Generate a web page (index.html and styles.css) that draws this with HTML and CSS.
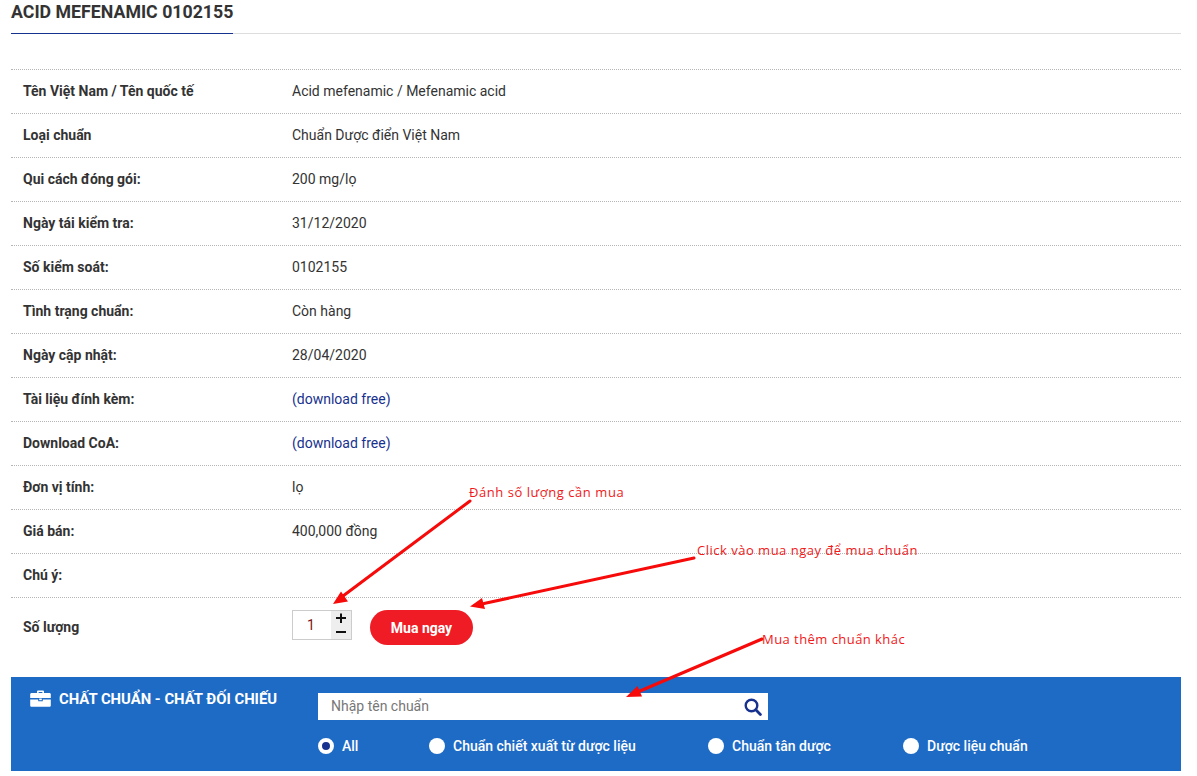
FILE: index.html
```html
<!DOCTYPE html>
<html lang="vi">
<head>
<meta charset="utf-8">
<title>ACID MEFENAMIC 0102155</title>
<link rel="stylesheet" href="styles.css">
</head>
<body>
<main class="page">
  <header class="head"><h1 class="title">ACID MEFENAMIC 0102155</h1></header>
  <section class="info">
    <div class="row"><div class="label">Tên Việt Nam / Tên quốc tế</div><div class="value">Acid mefenamic / Mefenamic acid</div></div>
    <div class="row"><div class="label">Loại chuẩn</div><div class="value">Chuẩn Dược điển Việt Nam</div></div>
    <div class="row"><div class="label">Qui cách đóng gói:</div><div class="value">200 mg/lọ</div></div>
    <div class="row"><div class="label">Ngày tái kiểm tra:</div><div class="value">31/12/2020</div></div>
    <div class="row"><div class="label">Số kiểm soát:</div><div class="value">0102155</div></div>
    <div class="row"><div class="label">Tình trạng chuẩn:</div><div class="value">Còn hàng</div></div>
    <div class="row"><div class="label">Ngày cập nhật:</div><div class="value">28/04/2020</div></div>
    <div class="row"><div class="label">Tài liệu đính kèm:</div><div class="value"><a class="link" href="#">(download free)</a></div></div>
    <div class="row"><div class="label">Download CoA:</div><div class="value"><a class="link" href="#">(download free)</a></div></div>
    <div class="row"><div class="label">Đơn vị tính:</div><div class="value">lọ</div></div>
    <div class="row"><div class="label">Giá bán:</div><div class="value">400,000 đồng</div></div>
    <div class="row"><div class="label">Chú ý:</div><div class="value"></div></div>
    <div class="row row-buy">
      <div class="label">Số lượng</div>
      <div class="value buy">
        <div class="qty">
          <span class="qty-num">1</span>
          <span class="qty-btns">
            <svg class="qty-icon" viewBox="0 0 20 14" width="20" height="14" aria-hidden="true"><path d="M5 7h10M10 2.500v9.500" stroke="#111" stroke-width="2"/></svg>
            <svg class="qty-icon" viewBox="0 0 20 14" width="20" height="14" aria-hidden="true"><path d="M5 7h10" stroke="#111" stroke-width="2"/></svg>
          </span>
        </div>
        <button class="buy-btn" type="button">Mua ngay</button>
      </div>
    </div>
  </section>
  <section class="panel">
    <div class="panel-title">
      <svg class="case" viewBox="0 0 21 17" width="21" height="17" aria-hidden="true">
        <path d="M7 3V1.600C7 .9 7.600.4 8.200.4h4.600c.7 0 1.200.5 1.200 1.200V3h-1.600V2H8.600v1z" fill="#fff"/>
        <path d="M1.600 3h17.800c.8 0 1.400.6 1.400 1.400V8H.2V4.400C.2 3.600.8 3 1.600 3z" fill="#fff"/>
        <path d="M.2 9.400h8v1.800h4.600V9.400h8v6c0 .8-.6 1.400-1.400 1.400H1.600c-.8 0-1.400-.6-1.400-1.400z" fill="#fff"/>
        <rect x="9.200" y="8.600" width="2.600" height="1.600" fill="#fff"/>
      </svg>
      <span class="panel-name">CHẤT CHUẨN - CHẤT ĐỐI CHIẾU</span>
    </div>
    <div class="panel-main">
      <div class="search">
        <span class="placeholder">Nhập tên chuẩn</span>
        <svg class="search-icon" viewBox="0 0 18 18" width="18" height="18" aria-hidden="true">
          <circle cx="7.500" cy="7.500" r="5.800" fill="none" stroke="#17318f" stroke-width="2.400"/>
          <path d="M11.800 11.800L16.400 16.400" stroke="#17318f" stroke-width="2.800" stroke-linecap="round"/>
        </svg>
      </div>
      <div class="radios">
        <label class="radio radio-all"><span class="dot dot-on"></span>All</label>
        <label class="radio radio-extract"><span class="dot"></span>Chuẩn chiết xuất từ dược liệu</label>
        <label class="radio radio-new"><span class="dot"></span>Chuẩn tân dược</label>
        <label class="radio"><span class="dot"></span>Dược liệu chuẩn</label>
      </div>
    </div>
  </section>
</main>
<svg class="arrows" viewBox="0 0 1197 776" width="1197" height="776" aria-hidden="true">
  <path d="M470 501L343 596" class="arrow"/>
  <path d="M333 604L348 601.500L341 591.500z" class="head-fill"/>
  <path d="M694 558L484 603.500" class="arrow"/>
  <path d="M470 606.500L485 609L482 598z" class="head-fill"/>
  <path d="M762 639L640 691" class="arrow"/>
  <path d="M626 697L642 696.500L637.500 686z" class="head-fill"/>
</svg>
<span class="note note-qty">Đánh số lượng cần mua</span>
<span class="note note-buy">Click vào mua ngay để mua chuẩn</span>
<span class="note note-more">Mua thêm chuẩn khác</span>
</body>
</html>
```
FILE: styles.css
```css
* { box-sizing: border-box; }
html, body { margin: 0; padding: 0; background: #fff; }
body {
  position: relative;
  height: 776px;
  overflow: hidden;
  font-family: Roboto, "Liberation Sans", sans-serif;
  font-size: 14px;
  color: #333;
}
.page { padding: 0 16px 0 11px; }
.head { height: 34px; border-bottom: 1px solid #ddd; margin-bottom: 35px; }
.title {
  display: inline-block;
  margin: 0;
  height: 34px;
  padding-top: 1px;
  font-size: 17.75px;
  font-weight: 700;
  line-height: 23px;
  color: #333;
  border-bottom: 1px solid #17318f;
}
.row {
  display: flex;
  align-items: center;
  height: 44px;
  padding-bottom: 2px;
  border-top: 1px dotted #b5b5b5;
}
.label {
  width: 281px;
  padding-left: 12px;
  font-weight: 700;
  flex: none;
}
.value { flex: 1; }
.link { color: #17318f; text-decoration: none; }
.row-buy { height: 80px; align-items: flex-start; padding: 12px 0 0; }
.row-buy .label { padding-top: 9px; }
.buy { display: flex; align-items: flex-start; gap: 18px; }
.qty {
  display: flex;
  width: 60px;
  height: 30px;
  border: 1px solid #ccc;
}
.qty-num {
  flex: 1;
  padding-right: 2px;
  text-align: center;
  line-height: 28px;
  color: #7a1616;
}
.qty-btns {
  display: flex;
  flex-direction: column;
  width: 20px;
  background: #eee;
}
.qty-icon { display: block; flex: 1; }
.buy-btn {
  width: 103px;
  height: 35px;
  padding: 0;
  border: 0;
  border-radius: 18px;
  background: #ef1c25;
  color: #fff;
  font-family: inherit;
  font-size: 14px;
  font-weight: 700;
}
.panel {
  display: flex;
  height: 94px;
  background: #1e6bc6;
  color: #fff;
}
.panel-title {
  display: flex;
  align-items: center;
  gap: 8px;
  width: 307px;
  height: 42px;
  padding-left: 19px;
  flex: none;
  font-size: 14.85px;
  font-weight: 700;
}
.panel-name { padding-top: 2px; }
.case { flex: none; }
.panel-main { padding-top: 16px; }
.search {
  display: flex;
  align-items: center;
  justify-content: space-between;
  width: 450px;
  height: 27px;
  padding: 0 6px 0 13px;
  background: #fff;
}
.placeholder { color: #777; padding-bottom: 2px; }
.radios { display: flex; margin-top: 17px; font-weight: 500; }
.radio { display: flex; align-items: center; gap: 8px; line-height: 18px; }
.radio-all { width: 111px; }
.radio-extract { width: 279px; }
.radio-new { width: 195px; }
.dot {
  width: 16px;
  height: 16px;
  border-radius: 50%;
  background: #fff;
  flex: none;
}
.dot-on { border: 4px solid #fff; background: #17318f; }
.arrows { position: absolute; left: 0; top: 0; pointer-events: none; }
.arrow { fill: none; stroke: #f60a0a; stroke-width: 3; stroke-linecap: round; }
.head-fill { fill: #f60a0a; }
.note {
  position: absolute;
  font-family: "Open Sans", "Noto Sans", sans-serif;
  font-size: 13px;
  line-height: 18px;
  color: #f01818;
  white-space: nowrap;
}
.note-qty { left: 469px; top: 483px; letter-spacing: .55px; }
.note-buy { left: 697px; top: 541px; letter-spacing: .5px; }
.note-more { left: 762px; top: 630px; letter-spacing: .45px; }
```
